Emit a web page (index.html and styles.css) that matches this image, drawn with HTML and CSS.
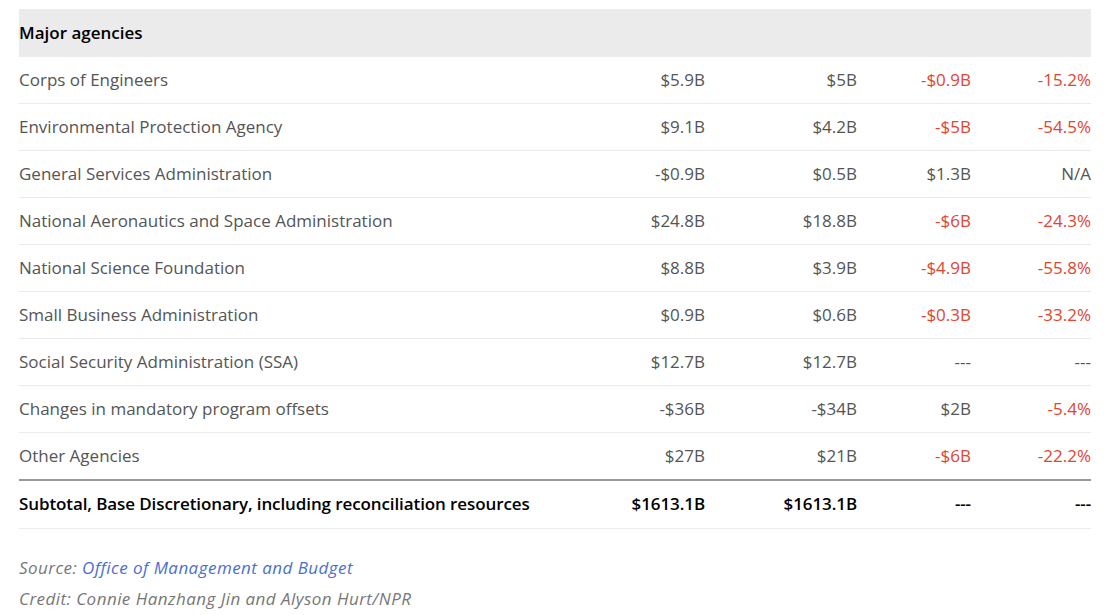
FILE: index.html
```html
<!DOCTYPE html>
<html>
<head>
<meta charset="utf-8">
<link rel="stylesheet" href="styles.css">
</head>
<body>
<div class="wrap">
<table class="budget">
  <colgroup>
    <col class="c-name"><col class="c-a"><col class="c-b"><col class="c-c"><col class="c-d">
  </colgroup>
  <tbody>
    <tr class="section"><td colspan="5">Major agencies</td></tr>
    <tr><td>Corps of Engineers</td><td class="num">$5.9B</td><td class="num">$5B</td><td class="num neg">-$0.9B</td><td class="num neg">-15.2%</td></tr>
    <tr><td>Environmental Protection Agency</td><td class="num">$9.1B</td><td class="num">$4.2B</td><td class="num neg">-$5B</td><td class="num neg">-54.5%</td></tr>
    <tr><td>General Services Administration</td><td class="num">-$0.9B</td><td class="num">$0.5B</td><td class="num">$1.3B</td><td class="num">N/A</td></tr>
    <tr><td>National Aeronautics and Space Administration</td><td class="num">$24.8B</td><td class="num">$18.8B</td><td class="num neg">-$6B</td><td class="num neg">-24.3%</td></tr>
    <tr><td>National Science Foundation</td><td class="num">$8.8B</td><td class="num">$3.9B</td><td class="num neg">-$4.9B</td><td class="num neg">-55.8%</td></tr>
    <tr><td>Small Business Administration</td><td class="num">$0.9B</td><td class="num">$0.6B</td><td class="num neg">-$0.3B</td><td class="num neg">-33.2%</td></tr>
    <tr><td>Social Security Administration (SSA)</td><td class="num">$12.7B</td><td class="num">$12.7B</td><td class="num">---</td><td class="num">---</td></tr>
    <tr><td>Changes in mandatory program offsets</td><td class="num">-$36B</td><td class="num">-$34B</td><td class="num">$2B</td><td class="num neg">-5.4%</td></tr>
    <tr class="last"><td>Other Agencies</td><td class="num">$27B</td><td class="num">$21B</td><td class="num neg">-$6B</td><td class="num neg">-22.2%</td></tr>
    <tr class="total"><td>Subtotal, Base Discretionary, including reconciliation resources</td><td class="num">$1613.1B</td><td class="num">$1613.1B</td><td class="num">---</td><td class="num">---</td></tr>
  </tbody>
</table>
<div class="notes">
  <p class="note">Source: <a class="link" href="#">Office of Management and Budget</a></p>
  <p class="note">Credit: Connie Hanzhang Jin and Alyson Hurt/NPR</p>
</div>
</div>
</body>
</html>
```

FILE: styles.css
```css
html, body {
  margin: 0;
  padding: 0;
  background: #fff;
}
body {
  font-family: "Open Sans", "Liberation Sans", sans-serif;
  font-size: 17px;
  color: #555;
}
.wrap {
  padding: 9px 27px 0 19px;
}
.budget {
  width: 1072px;
  border-collapse: collapse;
  table-layout: fixed;
}
.c-name { width: 566px; }
.c-a { width: 120px; }
.c-b { width: 152px; }
.c-c { width: 114px; }
.c-d { width: 120px; }
.budget td {
  height: 44px;
  padding: 0 0 2px;
  border-bottom: 1px solid #ebebeb;
  vertical-align: middle;
  white-space: nowrap;
}
.budget .num { text-align: right; }
.budget .neg { color: #e0452f; }
.section td {
  background: #ebebeb;
  color: #000;
  font-weight: 600;
  height: 46px;
  border-bottom: 0;
}
.last td {
  border-bottom: 2px solid #999;
}
.total td {
  color: #000;
  font-weight: 600;
  height: 45px;
  letter-spacing: -0.1px;
}
.notes {
  padding-top: 23px;
}
.note {
  margin: 0;
  font-style: italic;
  color: #777;
  line-height: 31px;
  letter-spacing: 0.45px;
}
.link {
  color: #4a6fcf;
  text-decoration: none;
}
```
